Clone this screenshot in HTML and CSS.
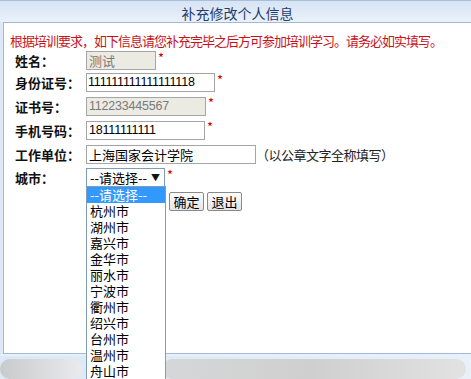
FILE: index.html
```html
<!DOCTYPE html>
<html>
<head>
<meta charset="utf-8">
<link rel="stylesheet" href="styles.css">
</head>
<body>
<div class="page">
  <div class="header">补充修改个人信息</div>
  <div class="panel">
    <p class="notice">根据培训要求，如下信息请您补充完毕之后方可参加培训学习。请务必如实填写。</p>
    <div class="form">
      <div class="row r1">
        <span class="label">姓名：</span>
        <span class="field w70 disabled">测试</span><span class="star">*</span>
      </div>
      <div class="row r2">
        <span class="label">身份证号：</span>
        <span class="field w129 num">111111111111111118</span><span class="star">*</span>
      </div>
      <div class="row r3">
        <span class="label">证书号：</span>
        <span class="field w120 disabled num">112233445567</span><span class="star">*</span>
      </div>
      <div class="row r4">
        <span class="label">手机号码：</span>
        <span class="field w119 num">18111111111</span><span class="star">*</span>
      </div>
      <div class="row r5">
        <span class="label">工作单位：</span>
        <span class="field w170">上海国家会计学院</span><span class="hint">（以公章文字全称填写）</span>
      </div>
      <div class="row r6">
        <span class="label">城市：</span>
        <span class="select"><span>--请选择--</span><span class="arrow">▼</span></span><span class="star">*</span>
      </div>
      <div class="buttons">
        <span class="btn">确定</span><span class="btn">退出</span>
      </div>
    </div>
    <ul class="dropdown">
      <li class="sel">--请选择--</li>
      <li>杭州市</li>
      <li>湖州市</li>
      <li>嘉兴市</li>
      <li>金华市</li>
      <li>丽水市</li>
      <li>宁波市</li>
      <li>衢州市</li>
      <li>绍兴市</li>
      <li>台州市</li>
      <li>温州市</li>
      <li>舟山市</li>
    </ul>
  </div>
  <div class="footer">
    <div class="blur blur-left"></div>
    <div class="blur blur-right"></div>
  </div>
</div>
</body>
</html>
```

FILE: styles.css
```css
* { box-sizing: border-box; }
html, body { margin: 0; padding: 0; }
body {
  width: 471px;
  height: 379px;
  overflow: hidden;
  background: linear-gradient(to right, #dce8f5, #e8f0fa);
  font-family: "Noto Sans CJK SC", "Liberation Sans", sans-serif;
  font-size: 13px;
  color: #000;
}
.page { display: flex; flex-direction: column; height: 379px; }
.header {
  height: 22px;
  line-height: 24px;
  text-align: center;
  color: #1f3d6b;
  font-size: 14px;
  border-top: 1px solid #a9bfdc;
  background: linear-gradient(to bottom, #d7e4f4, #eaf1fa);
  padding-left: 4px;
}
.panel {
  position: relative;
  margin-left: 3px;
  height: 333px;
  background: #fff;
  border: 1px solid #a4b8d3;
  border-right: none;
}
.notice {
  margin: 10px 0 0 6px;
  color: #c8121a;
  font-size: 13px;
  line-height: 16px;
  letter-spacing: -1px;
  white-space: nowrap;
}
.form { display: flex; flex-direction: column; }
.row {
  display: flex;
  align-items: center;
  height: 23px;
}
.r1 { height: 22px; }
.r2 { height: 23px; }
.r3 { height: 24px; }
.r4 { height: 25px; }
.r5 { height: 23px; }
.r6 { height: 23px; }
.label {
  width: 82px;
  padding-left: 11px;
  font-weight: bold;
  font-size: 13px;
  color: #111;
}
.field {
  height: 19px;
  line-height: 17px;
  border: 1px solid #a5a5a5;
  background: #fff;
  padding: 0 2px;
  font-size: 13px;
  white-space: nowrap;
  overflow: hidden;
}
.field.num { font-family: "Liberation Sans", sans-serif; font-size: 12.5px; letter-spacing: -0.2px; }
.field.disabled { background: #ebeae3; color: #7a7a7a; }
.w70 { width: 70px; }
.w129 { width: 129px; color: #000; padding: 0 1px; }
.w120 { width: 120px; }
.w119 { width: 119px; }
.w170 { width: 170px; }
.star { color: #c00; font-size: 13px; margin-left: 2px; align-self: flex-start; line-height: 16px; padding-top: 1px; }
.hint { margin-left: 0; font-size: 13px; color: #222; letter-spacing: -0.5px; }
.select {
  width: 79px;
  height: 19px;
  border: 1px solid #7f9db9;
  display: flex;
  align-items: center;
  justify-content: space-between;
  padding: 0 4px 0 3px;
  font-size: 13px;
}
.arrow { font-size: 9px; color: #111; }
.buttons {
  display: flex;
  gap: 3px;
  margin: 3px 0 0 165px;
}
.btn {
  width: 35px;
  height: 19px;
  line-height: 17px;
  text-align: center;
  border: 1px solid #8a8a8a;
  border-radius: 2px;
  background: linear-gradient(to bottom, #fdfdfd, #e4e4e4);
  font-size: 13px;
}
.dropdown {
  position: absolute;
  left: 82px;
  top: 163px;
  width: 80px;
  margin: 0;
  padding: 0;
  list-style: none;
  background: #fff;
  border: 1px solid #7f9db9;
  border-bottom: none;
  z-index: 5;
  height: 240px;
}
.dropdown li {
  height: 16px;
  line-height: 16px;
  padding-left: 3px;
  font-size: 13px;
}
.dropdown li.sel { background: #3399ff; color: #fff; }
.footer {
  flex: 1;
  display: flex;
  align-items: flex-end;
  border-top: 2px solid #e6f0fb;
}
.blur {
  height: 20px;
  border-radius: 10px;
  margin-top: 3px;
}
.blur-left {
  width: 82px;
  background: linear-gradient(to right, #c9cacb, #dcdddf 60%, #e9ebee);
}
.blur-right {
  margin-left: 80px;
  width: 304px;
  background: linear-gradient(to right, #d6d7d8, #cfcfcf 50%, #e2e2e2);
}
```
